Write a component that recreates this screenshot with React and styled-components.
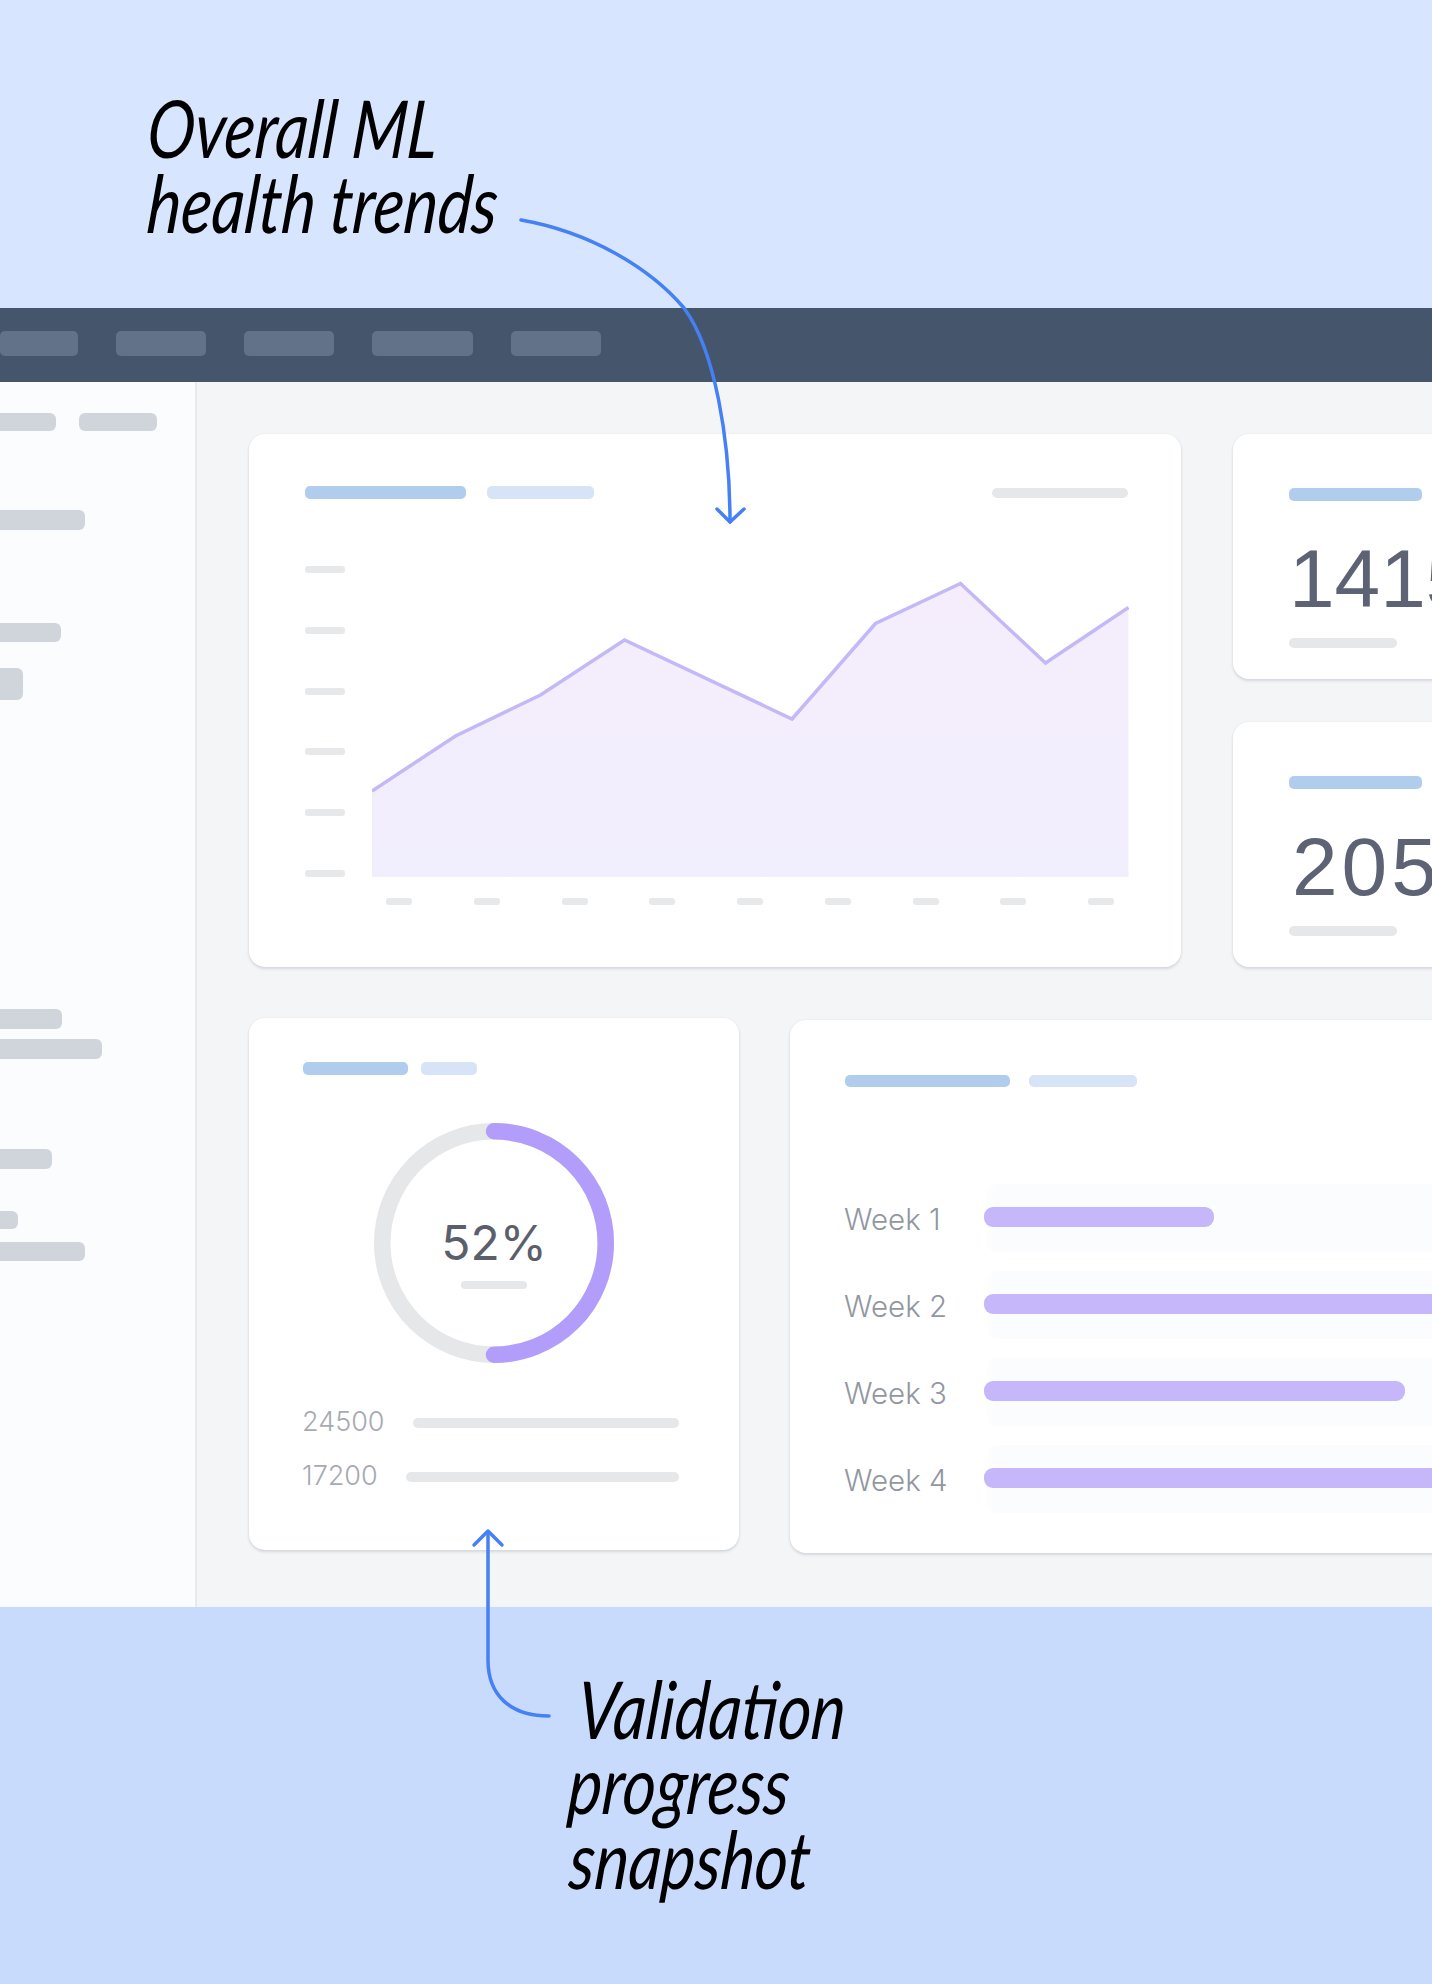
import React from 'react'
import styled, { createGlobalStyle } from 'styled-components'

const GlobalStyle = createGlobalStyle`
  html, body {
    margin: 0;
    padding: 0;
    background: #d8e5fe;
    font-family: "Inter", "Liberation Sans", sans-serif;
  }
`

const Page = styled.div`
  position: relative;
  width: 1432px;
  height: 1984px;
  overflow: hidden;
  display: flex;
  flex-direction: column;
`

const TopBand = styled.div`
  height: 308px;
  flex: none;
  box-sizing: border-box;
  padding: 90px 0 0 145px;
  background: #d8e5fe;
`

const BottomBand = styled.div`
  flex: 1;
  box-sizing: border-box;
  padding: 64px 0 0 570px;
  background: #c9dbfc;
`

const Note = styled.div`
  font-family: "Lato", "Liberation Sans", sans-serif;
  font-style: italic;
  font-size: 80px;
  line-height: 75px;
  color: #000;
  white-space: nowrap;
`

const NoteLine = styled.div`
  margin-left: ${p => p.$indent || 0}px;
  transform-origin: left bottom;
  transform: scaleX(${p => p.$sx}) skewX(-6deg);
`

const Dash = styled.div`
  height: 1299px;
  flex: none;
  display: flex;
  flex-direction: column;
`

const TopBar = styled.div`
  height: 74px;
  flex: none;
  box-sizing: border-box;
  padding-bottom: 3px;
  display: flex;
  align-items: center;
  gap: 38px;
  background: #45566c;
`

const NavChip = styled.div`
  width: ${p => p.$w}px;
  height: 25px;
  border-radius: 5px;
  background: #627389;
`

const Body = styled.div`
  flex: 1;
  display: flex;
  min-height: 0;
`

const Sidebar = styled.div`
  width: 197px;
  flex: none;
  box-sizing: border-box;
  padding-top: 31px;
  background: #fbfcfe;
  border-right: 2px solid #e8eaed;
`

const SideRow = styled.div`
  display: flex;
  gap: 23px;
`

const SideBar = styled.div`
  width: ${p => p.$w}px;
  height: ${p => p.$h || 20}px;
  margin-top: ${p => p.$mt || 0}px;
  border-radius: 0 6px 6px 0;
  background: #d0d4db;
`

const SideBarRound = styled(SideBar)`
  border-radius: 6px;
`

const Main = styled.div`
  flex: 1;
  min-width: 0;
  box-sizing: border-box;
  padding: 52px 0 0 52px;
  background: #f3f5f7;
  overflow: hidden;
`

const Row = styled.div`
  display: flex;
  align-items: flex-start;
  gap: ${p => p.$gap}px;
  margin-top: ${p => p.$mt || 0}px;
`

const Card = styled.div`
  flex: none;
  box-sizing: border-box;
  background: #fff;
  border-radius: 16px;
  box-shadow: 0 2px 3px rgba(40, 50, 70, 0.14), 0 0 3px rgba(40, 50, 70, 0.05);
`

const ChartCard = styled(Card)`
  width: 932px;
  height: 533px;
  padding: 52px 53px 0 56px;
`

const CardHead = styled.div`
  display: flex;
  align-items: center;
  gap: ${p => p.$gap || 21}px;
`

const Pill = styled.div`
  width: ${p => p.$w}px;
  height: ${p => p.$h || 13}px;
  flex: none;
  border-radius: 5px;
  background: ${p => (p.$light ? '#d7e4f8' : '#b0cded')};
`

const GreyPill = styled.div`
  width: ${p => p.$w}px;
  height: ${p => p.$h || 10}px;
  flex: none;
  border-radius: 5px;
  background: #e5e7e9;
  margin-left: ${p => (p.$push ? 'auto' : '0')};
`

const ChartRow = styled.div`
  display: flex;
  gap: 27px;
  margin-top: 67px;
`

const YAxis = styled.div`
  width: 40px;
  height: 311px;
  display: flex;
  flex-direction: column;
  justify-content: space-between;
`

const AxisTick = styled.div`
  height: 7px;
  width: ${p => p.$w || 40}px;
  border-radius: 3px;
  background: #e7e8ea;
`

const XAxis = styled.div`
  display: flex;
  justify-content: space-between;
  margin: 21px 14px 0 81px;
`

const StatColumn = styled.div`
  flex: none;
  display: flex;
  flex-direction: column;
  gap: 43px;
`

const StatCard = styled(Card)`
  width: 300px;
  height: 245px;
  padding: 54px 0 0 56px;
`

const StatNumber = styled.div`
  font-family: "Liberation Sans", Arial, sans-serif;
  font-size: 82px;
  line-height: 82px;
  letter-spacing: ${p => p.$ls || 0}px;
  color: #5d6374;
  margin: 37px 0 18px ${p => p.$indent || 0}px;
  white-space: nowrap;
`

const DonutCard = styled(Card)`
  width: 490px;
  height: 532px;
  padding: 44px 60px 0 54px;
`

const DonutWrap = styled.div`
  position: relative;
  width: 240px;
  height: 240px;
  margin: 48px 0 0 71px;
`

const DonutCenter = styled.div`
  position: absolute;
  inset: 18px 0 0;
  display: flex;
  flex-direction: column;
  align-items: center;
  justify-content: center;
`

const Percent = styled.div`
  font-size: 48px;
  line-height: 56px;
  color: #5b5f6b;
  margin: 0 0 10px;
`

const LegendRows = styled.div`
  display: flex;
  flex-direction: column;
  gap: 20px;
  margin-top: 41px;
`

const LegendRow = styled.div`
  display: flex;
  align-items: center;
  gap: 28px;
  height: 34px;
  margin-left: -1px;
`

const LegendValue = styled.div`
  font-size: 27px;
  font-weight: 300;
  color: #a7aab1;
`

const LegendTrack = styled.div`
  flex: 1;
  height: 10px;
  margin-top: 3px;
  border-radius: 5px;
  background: #e5e7e9;
`

const WeekCard = styled(Card)`
  width: 800px;
  height: 533px;
  margin-top: 2px;
  padding: 55px 0 0 55px;
`

const WeekRows = styled.div`
  display: flex;
  flex-direction: column;
  gap: 19px;
  margin-top: 97px;
`

const WeekRow = styled.div`
  display: flex;
  align-items: center;
  height: 68px;
`

const WeekLabel = styled.div`
  width: 140px;
  flex: none;
  margin: 2px 0 0 -1px;
  font-size: 29.5px;
  font-weight: 300;
  color: #92979f;
`

const WeekTrack = styled.div`
  flex: 1;
  height: 68px;
  box-sizing: border-box;
  padding-top: 23px;
  background: linear-gradient(90deg, #ffffff 0, #fbfcfd 10px);
  border-radius: 14px 0 0 14px;
`

const WeekBar = styled.div`
  width: ${p => p.$w}px;
  height: 20px;
  border-radius: 9px;
  background: #c6b6fa;
`

const Overlay = styled.svg`
  position: absolute;
  left: 0;
  top: 0;
  pointer-events: none;
`

const ChartSvg = styled.svg`
  display: block;
  flex: none;
`

const chartPoints = [
  [0, 225], [83.5, 170], [168.5, 129], [252.5, 74], [420, 153],
  [503.5, 57.5], [588.5, 17.5], [673.5, 97], [756.5, 41.5],
]

function AreaChart() {
  const line = chartPoints.map(p => p.join(',')).join(' ')
  return (
    <ChartSvg width="757" height="311" viewBox="0 0 757 311">
      <defs>
        <linearGradient id="areaFill" x1="0" y1="0" x2="0" y2="1">
          <stop offset="0" stopColor="#f5edfc" />
          <stop offset="1" stopColor="#f1eefd" />
        </linearGradient>
      </defs>
      <polygon points={`0,311 ${line} 756.5,311`} fill="url(#areaFill)" />
      <polyline points={line} fill="none" stroke="#c4b8f7" strokeWidth="3.5" />
    </ChartSvg>
  )
}

function Donut() {
  return (
    <svg width="240" height="240" viewBox="0 0 240 240">
      <circle cx="120" cy="120" r="111.75" fill="none" stroke="#e6e7e9" strokeWidth="16.5" />
      <path
        d="M120 8.25 A111.75 111.75 0 0 1 120 231.75"
        fill="none"
        stroke="#b39dfb"
        strokeWidth="16.5"
        strokeLinecap="round"
      />
    </svg>
  )
}

function StatBox({ value, spacing, indent }) {
  return (
    <StatCard>
      <Pill $w={133} />
      <StatNumber $ls={spacing} $indent={indent}>{value}</StatNumber>
      <GreyPill $w={108} />
    </StatCard>
  )
}

const weeks = [
  { label: 'Week 1', width: 230 },
  { label: 'Week 2', width: 700 },
  { label: 'Week 3', width: 421 },
  { label: 'Week 4', width: 700 },
]

export default function App() {
  return (
    <Page>
      <GlobalStyle />
      <TopBand>
        <Note>
          <NoteLine $sx={0.8}>Overall ML</NoteLine>
          <NoteLine $sx={0.8}>health trends</NoteLine>
        </Note>
      </TopBand>

      <Dash>
        <TopBar>
          <NavChip $w={78} />
          <NavChip $w={90} />
          <NavChip $w={90} />
          <NavChip $w={101} />
          <NavChip $w={90} />
        </TopBar>
        <Body>
          <Sidebar>
            <SideRow>
              <SideBar $w={56} $h={18} />
              <SideBarRound $w={78} $h={18} />
            </SideRow>
            <SideBar $w={85} $mt={79} />
            <SideBar $w={61} $h={19} $mt={93} />
            <SideBar $w={23} $h={32} $mt={26} />
            <SideBar $w={62} $mt={309} />
            <SideBar $w={102} $mt={10} />
            <SideBar $w={52} $mt={90} />
            <SideBar $w={18} $h={18} $mt={42} />
            <SideBar $w={85} $h={19} $mt={13} />
          </Sidebar>
          <Main>
            <Row $gap={52}>
              <ChartCard>
                <CardHead>
                  <Pill $w={161} />
                  <Pill $w={107} $light />
                  <GreyPill $w={136} $push />
                </CardHead>
                <ChartRow>
                  <YAxis>
                    {[0, 1, 2, 3, 4, 5].map(i => <AxisTick key={i} />)}
                  </YAxis>
                  <AreaChart />
                </ChartRow>
                <XAxis>
                  {[0, 1, 2, 3, 4, 5, 6, 7, 8].map(i => <AxisTick key={i} $w={26} />)}
                </XAxis>
              </ChartCard>
              <StatColumn>
                <StatBox value="1415" />
                <StatBox value="205" spacing={4} indent={3} />
              </StatColumn>
            </Row>
            <Row $gap={51} $mt={51}>
              <DonutCard>
                <CardHead $gap={13}>
                  <Pill $w={105} />
                  <Pill $w={56} $light />
                </CardHead>
                <DonutWrap>
                  <Donut />
                  <DonutCenter>
                    <Percent>52%</Percent>
                    <GreyPill $w={66} $h={8} />
                  </DonutCenter>
                </DonutWrap>
                <LegendRows>
                  <LegendRow>
                    <LegendValue>24500</LegendValue>
                    <LegendTrack />
                  </LegendRow>
                  <LegendRow>
                    <LegendValue>17200</LegendValue>
                    <LegendTrack />
                  </LegendRow>
                </LegendRows>
              </DonutCard>
              <WeekCard>
                <CardHead $gap={19}>
                  <Pill $w={165} $h={12} />
                  <Pill $w={108} $h={12} $light />
                </CardHead>
                <WeekRows>
                  {weeks.map(w => (
                    <WeekRow key={w.label}>
                      <WeekLabel>{w.label}</WeekLabel>
                      <WeekTrack>
                        <WeekBar $w={w.width} />
                      </WeekTrack>
                    </WeekRow>
                  ))}
                </WeekRows>
              </WeekCard>
            </Row>
          </Main>
        </Body>
      </Dash>

      <BottomBand>
        <Note>
          <NoteLine $indent={5} $sx={0.8}>Validation</NoteLine>
          <NoteLine $indent={-4} $sx={0.8}>progress</NoteLine>
          <NoteLine $indent={-3} $sx={0.8}>snapshot</NoteLine>
        </Note>
      </BottomBand>

      <Overlay width="1432" height="1984" viewBox="0 0 1432 1984" fill="none" stroke="#4580f5" strokeWidth="3.5" strokeLinecap="round" strokeLinejoin="round">
        <path d="M521 220 C590 232 650 268 684 308 C715 350 730 440 730 522" />
        <path d="M717 509 L730 522 L744 509" />
        <path d="M549 1716 C510 1716 488 1695 488 1660 L488 1532" />
        <path d="M474 1545 L488 1531 L502 1545" />
      </Overlay>
    </Page>
  )
}
